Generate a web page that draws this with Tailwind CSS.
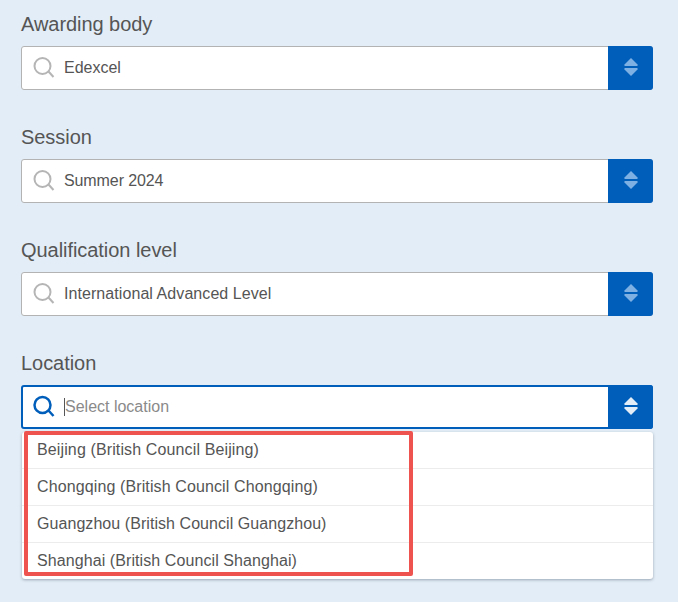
<!DOCTYPE html>
<html lang="en">
<head>
    <meta charset="UTF-8">
    <meta name="viewport" content="width=device-width, initial-scale=1.0">
    <title>Exam search</title>
    <script src="https://cdn.jsdelivr.net/npm/@tailwindcss/browser@4"></script>
</head>
<body class="bg-[#e3edf7] font-['Liberation_Sans',Arial,sans-serif] text-[#555]">
    <main class="w-[678px] h-[602px] overflow-hidden pt-[11px] pl-[21px] pr-[25px] flex flex-col gap-[34px]">
        <div>
            <label class="block text-[20px] leading-[26px] mb-[9px] tracking-[-0.05px]">Awarding body</label>
            <div class="flex h-[44px] bg-white border border-[#b3b3b3] rounded-[3px]">
                <svg class="w-[24px] h-[24px] ml-[10px] mr-[8px] self-center" viewBox="0 0 24 24" fill="none" stroke="#b5b5b5" stroke-width="2"><circle cx="10.500" cy="10" r="8"/><path d="M16.500 15.500 21.500 21"/></svg>
                <span class="self-center text-[16px]">Edexcel</span>
                <div class="ml-auto -mr-px -my-px w-[45px] bg-[#005ebb] rounded-r-[3px] flex items-center justify-center">
                    <svg class="w-[14px] h-[18px] -mt-[2px]" viewBox="0 0 14 18" fill="#7fb0e3"><path d="M7 0 14 7 13 8H1L0 7Z"/><path d="M1 10H13L14 11 7 18 0 11Z"/></svg>
                </div>
            </div>
        </div>
        <div>
            <label class="block text-[20px] leading-[26px] mb-[9px] tracking-[-0.05px]">Session</label>
            <div class="flex h-[44px] bg-white border border-[#b3b3b3] rounded-[3px]">
                <svg class="w-[24px] h-[24px] ml-[10px] mr-[8px] self-center" viewBox="0 0 24 24" fill="none" stroke="#b5b5b5" stroke-width="2"><circle cx="10.500" cy="10" r="8"/><path d="M16.500 15.500 21.500 21"/></svg>
                <span class="self-center text-[16px] tracking-[-0.1px]">Summer 2024</span>
                <div class="ml-auto -mr-px -my-px w-[45px] bg-[#005ebb] rounded-r-[3px] flex items-center justify-center">
                    <svg class="w-[14px] h-[18px] -mt-[2px]" viewBox="0 0 14 18" fill="#7fb0e3"><path d="M7 0 14 7 13 8H1L0 7Z"/><path d="M1 10H13L14 11 7 18 0 11Z"/></svg>
                </div>
            </div>
        </div>
        <div>
            <label class="block text-[20px] leading-[26px] mb-[9px] tracking-[-0.05px]">Qualification level</label>
            <div class="flex h-[44px] bg-white border border-[#b3b3b3] rounded-[3px]">
                <svg class="w-[24px] h-[24px] ml-[10px] mr-[8px] self-center" viewBox="0 0 24 24" fill="none" stroke="#b5b5b5" stroke-width="2"><circle cx="10.500" cy="10" r="8"/><path d="M16.500 15.500 21.500 21"/></svg>
                <span class="self-center text-[16px] tracking-[0.07px]">International Advanced Level</span>
                <div class="ml-auto -mr-px -my-px w-[45px] bg-[#005ebb] rounded-r-[3px] flex items-center justify-center">
                    <svg class="w-[14px] h-[18px] -mt-[2px]" viewBox="0 0 14 18" fill="#7fb0e3"><path d="M7 0 14 7 13 8H1L0 7Z"/><path d="M1 10H13L14 11 7 18 0 11Z"/></svg>
                </div>
            </div>
        </div>
        <div class="relative">
            <label class="block text-[20px] leading-[26px] mb-[9px] tracking-[-0.05px]">Location</label>
            <div class="flex h-[44px] bg-white border-2 border-[#005ebb] rounded-[3px]">
                <svg class="w-[24px] h-[24px] ml-[9px] mr-[8px] self-center" viewBox="0 0 24 24" fill="none" stroke="#005ebb" stroke-width="2.500"><circle cx="10.500" cy="10" r="8"/><path d="M16.500 15.500 21.500 21"/></svg>
                <span class="self-center text-[16px] text-[#8a8a8a] border-l border-[#555] leading-[18px]">Select location</span>
                <div class="ml-auto -mr-[2px] -my-[2px] w-[45px] bg-[#005ebb] rounded-r-[3px] flex items-center justify-center">
                    <svg class="w-[14px] h-[18px] -mt-[2px]" viewBox="0 0 14 18" fill="#e3edf7"><path d="M7 0 14 7 13 8H1L0 7Z"/><path d="M1 10H13L14 11 7 18 0 11Z"/></svg>
                </div>
            </div>
            <ul class="mt-[3px] ml-px bg-white rounded-[3px] shadow-[0_1px_3px_rgba(60,80,100,0.45)] text-[16px] divide-y divide-[#ececec]">
                <li class="h-[37px] pl-[15px] leading-[36px] tracking-[0.125px]">Beijing (British Council Beijing)</li>
                <li class="h-[37px] pl-[15px] leading-[36px] tracking-[0.115px]">Chongqing (British Council Chongqing)</li>
                <li class="h-[37px] pl-[15px] leading-[36px] tracking-[0.06px]">Guangzhou (British Council Guangzhou)</li>
                <li class="h-[36px] pl-[15px] leading-[36px] tracking-[0.085px]">Shanghai (British Council Shanghai)</li>
            </ul>
            <div class="absolute left-[3px] top-[81px] w-[389px] h-[145px] border-[4px] border-[#ef5350] rounded-[2px]"></div>
        </div>
    </main>
</body>
</html>
